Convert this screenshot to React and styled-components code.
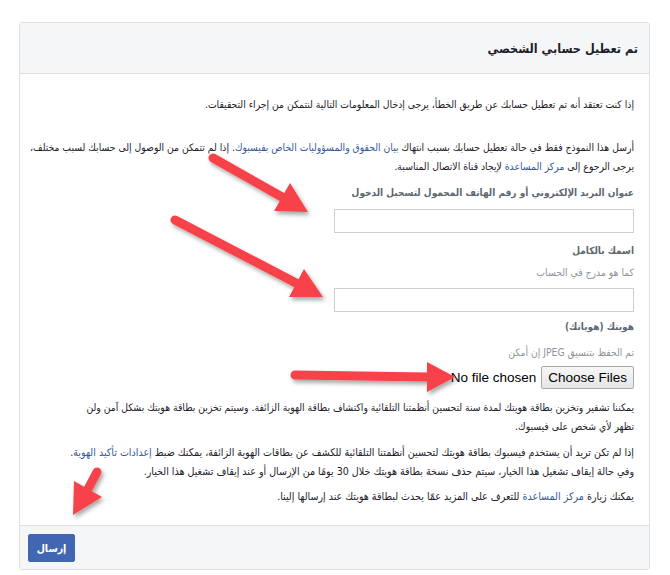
import React from "react";
import styled, { createGlobalStyle } from "styled-components";

const Global = createGlobalStyle`
  html, body { margin: 0; padding: 0; background: #fff; }
  body { font-family: "DejaVu Sans Condensed", "DejaVu Sans", sans-serif; }
`;

const Page = styled.div`
  position: relative;
  width: 670px;
  height: 575px;
  padding: 22px 20px 0 19px;
  box-sizing: border-box;
`;

const Card = styled.div`
  border: 1px solid #dddfe2;
  border-radius: 3px;
  background: #fff;
  overflow: hidden;
`;

const Header = styled.div`
  direction: rtl;
  height: 50px;
  background: #f5f6f7;
  border-bottom: 1px solid #dddfe2;
  display: flex;
  align-items: center;
  padding: 0 11px;
`;

const Title = styled.h2`
  margin: 0;
  font-size: 12.5px;
  font-weight: bold;
  color: #1d2129;
`;

const Body = styled.div`
  direction: rtl;
  padding: 21px 15px 19px 3px;
  display: flex;
  flex-direction: column;
`;

const Para = styled.p`
  margin: ${(p) => p.$mt || 0}px 0 0;
  font-size: ${(p) => p.$fs || 10.3}px;
  line-height: 19px;
  color: #1d2129;
`;

const Link = styled.span`
  color: #365899;
`;

const Label = styled.div`
  margin-top: ${(p) => p.$mt || 0}px;
  font-size: 10px;
  line-height: 16px;
  font-weight: bold;
  color: #606770;
`;

const Help = styled.div`
  margin-top: ${(p) => p.$mt || 0}px;
  font-size: 10.3px;
  line-height: 16px;
  color: #90949c;
`;

const Input = styled.input`
  margin-top: ${(p) => p.$mt || 0}px;
  width: 300px;
  height: 24px;
  box-sizing: border-box;
  border: 1px solid #ccd0d5;
  border-radius: 0;
  outline: none;
  background: #fff;
`;

const FileRow = styled.div`
  margin-top: 6px;
  display: flex;
  align-items: center;
  gap: 5px;
`;

const FileButton = styled.button`
  height: 23px;
  padding: 0 6px;
  font-family: "Liberation Sans", Arial, sans-serif;
  font-size: 13.5px;
  color: #000;
  background: linear-gradient(#f6f6f6, #e6e6e6);
  border: 1px solid #a9a9a9;
  border-radius: 2px;
`;

const FileText = styled.span`
  font-family: "Liberation Sans", Arial, sans-serif;
  font-size: 13.5px;
  color: #000;
`;

const Footer = styled.div`
  border-top: 1px solid #dddfe2;
  background: #f5f6f7;
  padding: 8px 8px 7px;
  display: flex;
`;

const Submit = styled.button`
  width: 47px;
  height: 28px;
  background: #4267b2;
  border: 1px solid #4267b2;
  border-radius: 2px;
  color: #fff;
  font-weight: bold;
  font-size: 10.5px;
  font-family: "DejaVu Sans Condensed", "DejaVu Sans", sans-serif;
`;

const Overlay = styled.svg`
  position: absolute;
  left: 0;
  top: 0;
  pointer-events: none;
`;

const arrows = [
  { x1: 213, y1: 158, bx: 282, by: 197, pts: "308,212 274,211 290,183" },
  { x1: 175, y1: 220, bx: 296, by: 283, pts: "323,297 289,297 304,269" },
  { x1: 295, y1: 375, bx: 427, by: 377, pts: "455,377 427,362 427,392" },
  { x1: 97, y1: 472, bx: 88, by: 489, pts: "73,515 74,481 102,497" },
];

export default function App() {
  return (
    <Page>
      <Global />
      <Card>
        <Header>
          <Title>تم تعطيل حسابي الشخصي</Title>
        </Header>
        <Body>
          <Para>
            إذا كنت تعتقد أنه تم تعطيل حسابك عن طريق الخطأ، يرجى إدخال المعلومات التالية لنتمكن من إجراء التحقيقات.
          </Para>
          <Para $mt={24}>
            أرسل هذا النموذج فقط في حالة تعطيل حسابك بسبب انتهاك <Link>بيان الحقوق والمسؤوليات الخاص بفيسبوك</Link>. إذا لم تتمكن من الوصول إلى حسابك لسبب مختلف،
            <br />
            يرجى الرجوع إلى <Link>مركز المساعدة</Link> لإيجاد قناة الاتصال المناسبة.
          </Para>
          <Label $mt={9}>عنوان البريد الإلكتروني أو رقم الهاتف المحمول لتسجيل الدخول</Label>
          <Input $mt={8} />
          <Label $mt={10}>اسمك بالكامل</Label>
          <Help $mt={5}>كما هو مدرج في الحساب</Help>
          <Input $mt={8} />
          <Label $mt={7}>هويتك (هوياتك)</Label>
          <Help $mt={9}>تم الحفظ بتنسيق JPEG إن أمكن</Help>
          <FileRow>
            <FileButton type="button">Choose Files</FileButton>
            <FileText>No file chosen</FileText>
          </FileRow>
          <Para $mt={9}>
            يمكننا تشفير وتخزين بطاقة هويتك لمدة سنة لتحسين أنظمتنا التلقائية واكتشاف بطاقة الهوية الزائفة. وسيتم تخزين بطاقة هويتك بشكل آمن ولن
            <br />
            تظهر لأي شخص على فيسبوك.
          </Para>
          <Para $mt={7} $fs={10.6}>
            إذا لم تكن تريد أن يستخدم فيسبوك بطاقة هويتك لتحسين أنظمتنا التلقائية للكشف عن بطاقات الهوية الزائفة، يمكنك ضبط <Link>إعدادات تأكيد الهوية</Link>.
            <br />
            وفي حالة إيقاف تشغيل هذا الخيار، سيتم حذف نسخة بطاقة هويتك خلال 30 يومًا من الإرسال أو عند إيقاف تشغيل هذا الخيار.
          </Para>
          <Para $mt={6} $fs={10.6}>
            يمكنك زيارة <Link>مركز المساعدة</Link> للتعرف على المزيد عمّا يحدث لبطاقة هويتك عند إرسالها إلينا.
          </Para>
        </Body>
        <Footer>
          <Submit type="button">إرسال</Submit>
        </Footer>
      </Card>
      <Overlay width="670" height="575" viewBox="0 0 670 575">
        <defs>
          <filter id="sh" x="-20%" y="-20%" width="140%" height="140%">
            <feDropShadow dx="2" dy="3" stdDeviation="2" floodColor="#000" floodOpacity="0.35" />
          </filter>
        </defs>
        {arrows.map((a, i) => (
          <g key={i} filter="url(#sh)" fill="#f74348" stroke="#f74348">
            <line x1={a.x1} y1={a.y1} x2={a.bx} y2={a.by} strokeWidth="9" strokeLinecap="round" />
            <polygon points={a.pts} stroke="none" />
          </g>
        ))}
      </Overlay>
    </Page>
  );
}
